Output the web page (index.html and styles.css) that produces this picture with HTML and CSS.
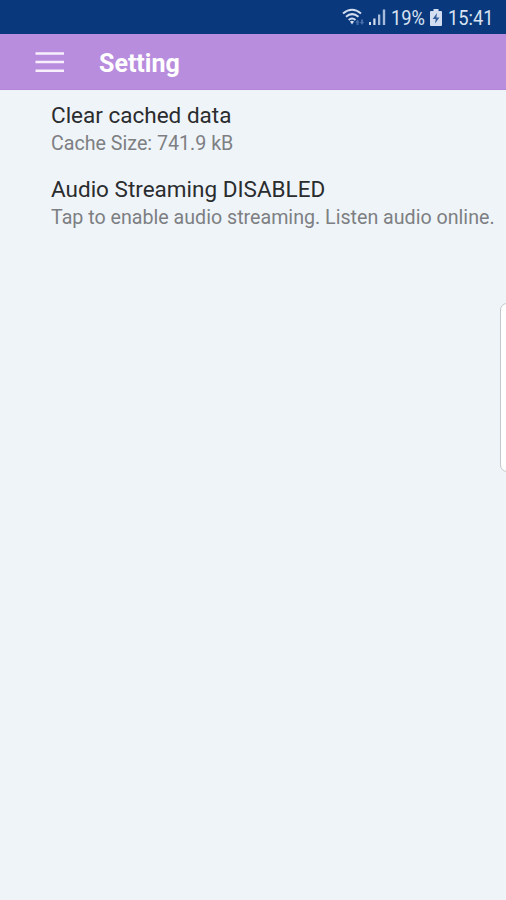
FILE: index.html
```html
<!DOCTYPE html>
<html lang="en">
<head>
<meta charset="utf-8">
<title>Setting</title>
<link rel="stylesheet" href="styles.css">
</head>
<body>
<div class="screen">
  <header class="status">
    <svg class="signals" viewBox="0 0 46 22" width="46" height="22">
      <g fill="none" stroke="#d3def0" stroke-width="2">
        <path d="M1 6.500Q10 -1 19 6.500"/>
        <path d="M4 9.800Q10 4.500 16.500 9.800"/>
        <path d="M6.700 13Q10 10 13.500 13"/>
      </g>
      <path d="M8 14.500Q10 13 12 14.500L10 17.500Z" fill="#d3def0"/>
      <path d="M15.500 12.500l2.200 3h-1.200v2.500h-2v-2.500h-1.200zM20 18l-2.200-3h1.200v-2.500h2v2.500h1.200z" fill="#456ca9"/>
      <path d="M27 15h2v3h-2zM31.300 11.500h2.200V18h-2.200z" fill="#d3def0"/>
      <path d="M36 7.500h2.300V18H36zM40.800 2.500h2.400V18h-2.400z" fill="#a6bbdc"/>
    </svg>
    <span class="percent"><span class="narrow">19%</span></span>
    <svg class="battery" viewBox="0 0 12 18" width="12" height="18">
      <path d="M3.500 0h5v2H11q1 0 1 1v13q0 1-1 1H1q-1 0-1-1V3q0-1 1-1h2.500z" fill="#d3def0"/>
      <path d="M7 4L2.700 10h3L5 14.500 9.400 8.500h-3z" fill="#315b9a"/>
    </svg>
    <span class="clock"><span class="narrow">15:41</span></span>
  </header>
  <nav class="bar">
    <svg class="menu" viewBox="0 0 30 22" width="30" height="22">
      <path d="M.5 2.500h28.500M.5 11h28.500M.5 19.700h28.500" stroke="#f8effc" stroke-width="2.600"/>
    </svg>
    <h1 class="title">Setting</h1>
  </nav>
  <main class="list">
    <section class="item">
      <h2 class="name">Clear cached data</h2>
      <p class="note">Cache Size: 741.9 kB</p>
    </section>
    <section class="item">
      <h2 class="name">Audio Streaming DISABLED</h2>
      <p class="note">Tap to enable audio streaming. Listen audio online.</p>
    </section>
  </main>
  <div class="edge"></div>
</div>
</body>
</html>
```
FILE: styles.css
```css
* { box-sizing: border-box; }
body { margin: 0; font-family: Roboto, sans-serif; }
h1, h2, p { margin: 0; font-weight: 400; white-space: nowrap; }
.screen {
  position: relative;
  width: 506px;
  height: 900px;
  overflow: hidden;
  background: #eff4f9;
}
.status {
  display: flex;
  align-items: center;
  height: 34px;
  padding: 1px 0 0 342px;
  background: #09397c;
  color: #d8e2f2;
  font-size: 21px;
}
.signals { margin-top: 1px; margin-right: 3px; }
.percent { width: 34px; }
.battery { margin: 0 6px 0 5px; }
.narrow {
  display: inline-block;
  transform: scaleX(.87);
  transform-origin: left;
}
.bar {
  display: flex;
  align-items: center;
  height: 56px;
  padding: 1px 0 0 35px;
  background: #b98ddd;
  border-bottom: 1px solid #b585d9;
}
.title {
  margin: 3px 0 0 34px;
  color: #fff;
  font-size: 25px;
  font-weight: 700;
  line-height: 30px;
}
.list { padding: 11px 0 0 51px; }
.item { height: 74px; }
.name { color: #2a2c2e; font-size: 22.5px; line-height: 28px; }
.note { margin-top: 1px; color: #7d7f82; font-size: 19.65px; line-height: 28px; }
.edge {
  position: absolute;
  left: 500px;
  top: 303px;
  width: 16px;
  height: 169px;
  background: #fff;
  border: 1px solid #c4c7c9;
  border-radius: 7px;
}
```
